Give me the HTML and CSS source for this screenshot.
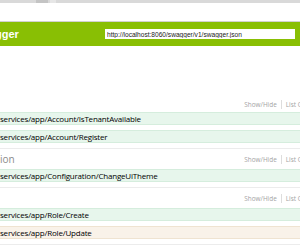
FILE: index.html
```html
<!DOCTYPE html>
<html lang="en">
<head>
  <meta charset="UTF-8">
  <title>Swagger UI</title>
  <link rel="stylesheet" href="styles.css">
</head>
<body>

  <div class="chrome">
    <div class="tab"></div>
    <div class="tab tab-new"></div>
  </div>
  <div class="toolbar"></div>

  <div class="header">
    <span class="logo">gger</span>
    <input class="api-url" type="text" value="http://localhost:8060/swagger/v1/swagger.json">
  </div>

  <div class="content">
    <div class="resource first">
      <div class="resource-heading">
        <span class="resource-name"></span>
        <ul class="options">
          <li>Show/Hide</li>
          <li>List Operations</li>
        </ul>
      </div>
      <div class="operation post">services/app/Account/IsTenantAvailable</div>
      <div class="operation post">services/app/Account/Register</div>
    </div>

    <div class="resource">
      <div class="resource-heading">
        <span class="resource-name">ion</span>
        <ul class="options">
          <li>Show/Hide</li>
          <li>List Operations</li>
        </ul>
      </div>
      <div class="operation post">services/app/Configuration/ChangeUiTheme</div>
    </div>

    <div class="resource">
      <div class="resource-heading">
        <span class="resource-name"></span>
        <ul class="options">
          <li>Show/Hide</li>
          <li>List Operations</li>
        </ul>
      </div>
      <div class="operation post">services/app/Role/Create</div>
      <div class="operation put">services/app/Role/Update</div>
    </div>
  </div>

</body>
</html>
```

FILE: styles.css
```css
body {
  margin: 0;
  width: 300px;
  height: 247px;
  overflow: hidden;
  background-color: white;
  font-family: 'Open Sans', sans-serif;
}

.chrome {
  height: 3px;
  background-color: #d9d9d9;
  display: flex;
  padding-left: 36px;
  gap: 2px;
}

.tab {
  width: 12px;
  background-color: #c4c4c4;
}

.tab-new {
  width: 6px;
  background-color: #e6e6e6;
}

.toolbar {
  height: 18px;
  border-bottom: 1px solid #d2d2d2;
  background-color: white;
}

.header {
  height: 24px;
  background-color: #89bf04;
  display: flex;
  align-items: center;
  overflow: hidden;
}

.logo {
  color: white;
  font-family: 'Liberation Sans', sans-serif;
  font-weight: bold;
  font-size: 11px;
  margin-left: -5px;
  margin-top: -1px;
}

.api-url {
  margin-left: auto;
  margin-right: 4px;
  width: 192px;
  height: 12px;
  box-sizing: border-box;
  border: 1px solid #89bf04;
  padding: 0 2px;
  font-family: 'Liberation Sans', sans-serif;
  font-size: 6.6px;
  color: #222;
  outline: none;
}

.content {
  padding-top: 46px;
}

.resource {
  border-bottom: 1px solid #ececec;
  overflow: hidden;
}

.resource-heading {
  height: 20px;
  display: flex;
  align-items: center;
  justify-content: space-between;
}

.resource.first .resource-heading {
  align-items: flex-end;
  padding-bottom: 3px;
  height: 17px;
}

.resource-name {
  color: #8c8c8c;
  font-size: 10px;
}

.options {
  list-style: none;
  margin: 0;
  padding: 0;
  display: flex;
  white-space: nowrap;
  margin-right: -35px;
  font-size: 6.4px;
  color: #a3a3a3;
}

.options li {
  padding: 0 4px;
}

.options li + li {
  border-left: 1px solid #ddd;
}

.operation {
  height: 13px;
  line-height: 12px;
  margin-bottom: 5px;
  font-size: 8px;
  letter-spacing: -0.2px;
  color: #000;
  white-space: nowrap;
  border-top: 1px solid;
  border-bottom: 1px solid;
  box-sizing: border-box;
}

.operation + .operation {
  margin-top: 1px;
}

.post {
  background-color: #e7f6ec;
  border-color: #d5eddd;
}

.put {
  background-color: #f9f2e9;
  border-color: #efe3d1;
  margin-top: -1px;
}
```
